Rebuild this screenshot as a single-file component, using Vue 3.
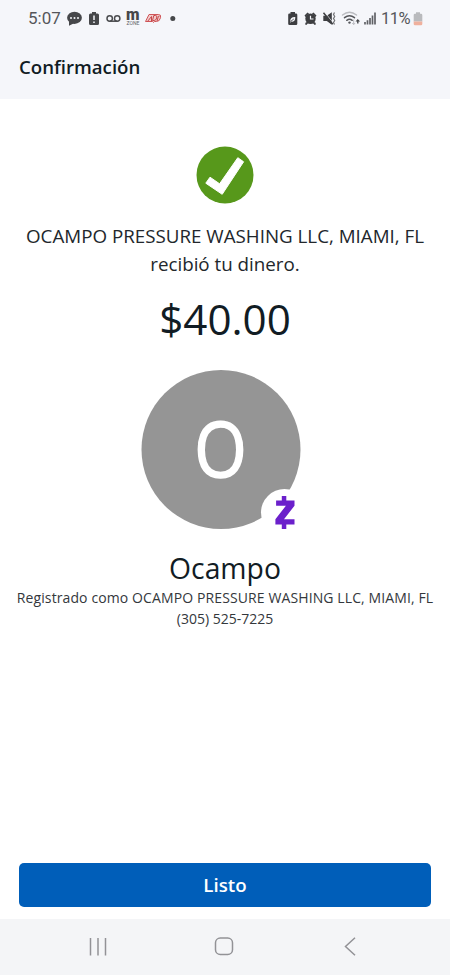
<script setup>
const recipient = 'OCAMPO PRESSURE WASHING LLC, MIAMI, FL'
</script>

<template>
  <div class="screen">
    <header class="top">
      <div class="status">
        <span class="time">5:07</span>
        <svg class="notices" width="112" height="24" viewBox="66 6 112 24">
          <ellipse cx="74.5" cy="17.8" rx="7.4" ry="6.1" fill="#46474a" />
          <path d="M69 21v4.800l6-3z" fill="#46474a" />
          <g fill="#f5f6fa"><circle cx="71" cy="18" r="1" /><circle cx="74.500" cy="18" r="1" /><circle cx="78" cy="18" r="1" /></g>
          <path d="M92 12h4v1.500h1.500q1.500 0 1.500 1.500v8.500q0 1.500-1.500 1.500h-7q-1.500 0-1.500-1.500v-8.500q0-1.500 1.500-1.500H92z" fill="#46474a" />
          <path d="M94 15.500v4.500M94 21.500v1.500" stroke="#f5f6fa" stroke-width="1.500" />
          <g fill="none" stroke="#4b4c4f" stroke-width="1.500"><circle cx="109.700" cy="18.500" r="2.700" /><circle cx="117.200" cy="18.500" r="2.700" /><path d="M109.700 21.200h7.500" /></g>
          <text x="126" y="20" class="m" textLength="13.500" lengthAdjust="spacingAndGlyphs">m</text>
          <text x="126.500" y="25.300" class="zone" textLength="13" lengthAdjust="spacingAndGlyphs">ZONE</text>
          <path d="M149 14.500h9.500q3 0 2 3.200-.8 3.800-4 3.800h-2l-1 1-1-1h-7z" fill="#f1cccc" stroke="#d05558" stroke-width="1" />
          <path d="M147.500 21.500l4-5v5M152.500 20.500l1.300-5h1.700q2 0 1.200 2.500t-2.500 2.500zM157 21l1.400-4.700h1" fill="none" stroke="#c6474a" stroke-width="1" />
          <circle cx="172.800" cy="18.500" r="2.500" fill="#46474a" />
        </svg>
        <svg class="signals" width="92" height="24" viewBox="286 6 92 24">
          <g fill="#3d3e41">
            <path d="M290.500 12h4.500v1.500h1q1.300 0 1.300 1.300v8.900q0 1.300-1.300 1.300h-6.500q-1.300 0-1.300-1.300v-8.900q0-1.300 1.300-1.300h1z" />
            <circle cx="310.500" cy="18.800" r="5.200" />
            <path d="M304.500 15.500l3-3 1.500 1-3.500 3.500zM316.500 15.500l-3-3-1.500 1 3.500 3.500zM306 22l-1 2.200 1.300.8 2-2zM315 22l1 2.200-1.300.8-2-2z" />
            <path d="M323.300 15.800h3.500l5-3.500v12.400l-5-3.700h-3.500z" />
          </g>
          <path d="M290.300 21.500q-.5-4.700 5-4.500 0 5.500-4 4.500l-1 1.500" fill="#f5f6fa" />
          <path d="M290.500 21.500l3.300-2.500" stroke="#3d3e41" stroke-width=".8" />
          <path d="M310.500 15.700v3.300h3" fill="none" stroke="#f5f6fa" stroke-width="1.200" />
          <path d="M325.700 13.500l7.500 9.500" stroke="#f5f6fa" stroke-width=".8" />
          <path d="M323.500 12.700l9.300 11.600" stroke="#3d3e41" stroke-width="1.500" />
          <path d="M334.500 12.500l-1 2 1.200 2-1.200 2 1.200 2-1.200 2 1 2" fill="none" stroke="#707174" stroke-width="1.200" />
          <g fill="none" stroke-linecap="round">
            <path d="M342.500 15q7-5.500 14 0" stroke="#bbbcc0" stroke-width="1.500" />
            <path d="M344.500 17.700q5-4 10 0M346.800 20.300q2.700-2 5.400 0" stroke="#55565a" stroke-width="1.500" />
          </g>
          <circle cx="349.500" cy="22.600" r="1.200" fill="#55565a" />
          <path d="M353.700 19.500v5M352.200 23l1.500 1.500 1.500-1.500" fill="none" stroke="#babbc0" />
          <path d="M355.500 21.600l2.300-2.600 2.300 2.600h-1.600v2h-1.400v-2z" fill="#46474a" />
          <path d="M365 22v2.500M367.500 20.300v4.200M370 18v6.500M372.500 15.500v9M375 12.500v12" stroke="#606165" stroke-width="1.700" />
        </svg>
        <span class="percent">11%</span>
        <svg class="battery" width="10" height="14" viewBox="0 0 10 14">
          <path d="M3 .3h4v1.500h1q1.300 0 1.300 1.300v6.400H.7V3.100q0-1.300 1.300-1.300h1z" fill="#b9babd" />
          <path d="M.7 9.500h8.600V12q0 1.200-1.300 1.200H2q-1.300 0-1.300-1.200z" fill="#efb09d" />
        </svg>
      </div>
      <h1>Confirmación</h1>
    </header>

    <main>
      <svg class="check" width="58" height="58" viewBox="0 0 58 58">
        <circle cx="29" cy="29" r="28.500" fill="#57981b" />
        <path d="M9.800 37.200L14 31.200 23.600 37.800 41.800 11.700 47.600 15.800 26.200 48.300z" fill="#fff" stroke="#fff" stroke-linejoin="round" />
      </svg>
      <p class="message"><span class="recipient">{{ recipient }}</span><br>recibió tu dinero.</p>
      <p class="amount">$40.00</p>
      <svg class="avatar" width="160" height="160" viewBox="0 0 160 160">
        <circle cx="80" cy="79.500" r="79.500" fill="#959595" />
        <text x="79.500" y="107" class="initial" text-anchor="middle" textLength="52.500" lengthAdjust="spacingAndGlyphs">O</text>
        <circle cx="143.500" cy="142.500" r="23.500" fill="#fff" />
        <path d="M140.800 126h4.500v4.500h8.200v5.200l-10.500 13.500h10.500v5.300h-8.200v4.500h-4.500v-4.500h-6.400v-5.200l10.500-13.600h-9.800v-5.200h5.700z" fill="#6b20cb" />
      </svg>
      <h2>Ocampo</h2>
      <p class="details"><span class="registered">Registrado como {{ recipient }}</span><br>(305) 525-7225</p>
    </main>

    <button class="done">Listo</button>

    <nav>
      <svg width="20" height="20" viewBox="0 0 20 20"><path d="M2.500 1v17.500M10 1v17.500M17.500 1v17.500" /></svg>
      <svg width="20" height="20" viewBox="0 0 20 20"><rect x="1.500" y="1" width="17" height="16.500" rx="4.800" /></svg>
      <svg width="20" height="20" viewBox="0 0 20 20"><path d="M15 .7L5.500 9.500l9.500 8.700" /></svg>
    </nav>
  </div>
</template>

<style>
body { background: #fff; }
</style>

<style scoped>
.screen {
  width: 450px;
  height: 975px;
  display: flex;
  flex-direction: column;
  background: #fff;
  color: #111c24;
  font-family: "Open Sans", "Noto Sans", sans-serif;
  overflow: hidden;
}
.top { height: 99px; background: #f5f6fa; flex: none; }
.status {
  display: flex;
  align-items: center;
  height: 24px;
  padding: 6px 27px 0 28px;
  color: #55565a;
  font: 17px/24px Roboto, sans-serif;
}
.time { width: 38px; font-size: 17px; }
.signals { margin-left: auto; }
.percent { width: 35px; padding: 2px 0 0 3px; box-sizing: border-box; font-size: 16.500px; letter-spacing: -.5px; }
.status svg { flex: none; }
.battery { margin-top: 1px; }
.m { font: 900 16px Roboto, sans-serif; fill: #46474a; }
.zone { font: 4.500px Roboto, sans-serif; fill: #66676a; }
h1 { margin: 24px 0 0 19px; font-size: 18.650px; line-height: 26px; font-weight: 600; }
main { display: flex; flex-direction: column; align-items: center; text-align: center; padding-top: 47px; }
p, h2 { margin: 0; }
.message { margin-top: 18px; font-size: 18.780px; line-height: 28px; white-space: nowrap; color: #22272c; }
.amount { margin-top: 12px; font-size: 42.200px; line-height: 58px; }
.avatar { margin: 22px 8px 0 0; }
.initial { font: 400 76px "Open Sans", sans-serif; fill: #fff; stroke: #fff; stroke-width: 1.600px; }
h2 { margin-top: 18px; font-size: 28.300px; line-height: 40px; font-weight: 400; }
.details { font-size: 14px; line-height: 20.500px; white-space: nowrap; color: #34383c; }
.registered { letter-spacing: .11px; }
.done {
  margin: auto 19px 12px;
  height: 44px;
  flex: none;
  border: 0;
  border-radius: 5px;
  background: #005eb9;
  color: #fff;
  font: 600 18.700px/44px "Open Sans", sans-serif;
  padding: 0;
}
nav {
  height: 56px;
  flex: none;
  display: flex;
  justify-content: space-between;
  box-sizing: border-box;
  padding: 18px 90px 0 88px;
  background: #f4f5f7;
}
nav svg { fill: none; stroke: #929296; stroke-width: 1.500; }
</style>
